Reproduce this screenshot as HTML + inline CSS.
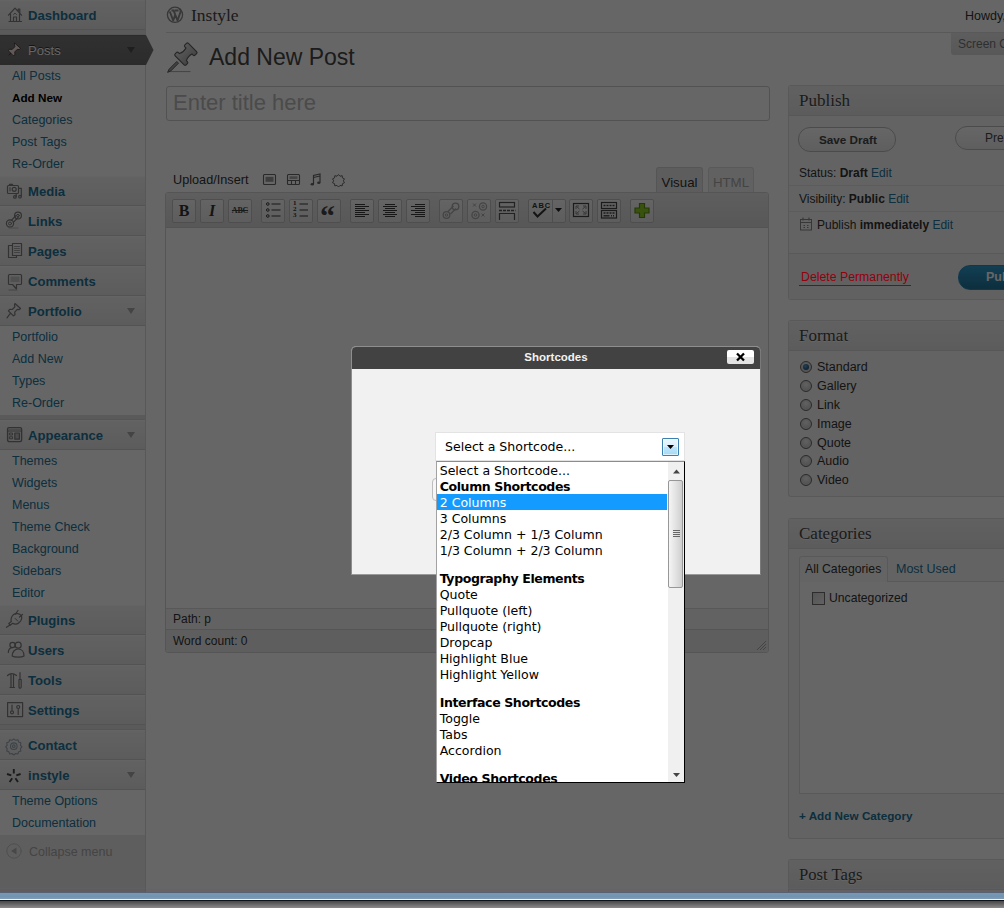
<!DOCTYPE html>
<html lang="en"><head><meta charset="utf-8"><title>Add New Post - Instyle - WordPress</title>
<style>
*{box-sizing:border-box;margin:0;padding:0}
html,body{width:1004px;height:908px;overflow:hidden;background:#fff}
body{font-family:"Liberation Sans",Arial,sans-serif;font-size:12px;color:#333;position:relative}
a{color:#21759b;text-decoration:none}
.abs{position:absolute}
#page{z-index:0;position:absolute;left:0;top:0;width:1004px;height:892px;overflow:hidden;background:#fff}
/* ---------- sidebar ---------- */
#menu{position:absolute;left:0;top:0;width:146px;height:892px;background:#ececec;border-right:1px solid #dcdcdc}
.mt{position:absolute;left:0;width:145px;height:30px;background:linear-gradient(#f4f4f4,#e6e6e6);border-top:1px solid #f9f9f9;border-bottom:1px solid #d0d0d0;font-weight:bold;font-size:13.1px;color:#21759b;line-height:30px;padding-left:28px;white-space:nowrap}
.mt.cur{background:linear-gradient(#7a7a7a,#6d6d6d);color:#fff;border-color:#6d6d6d;font-weight:normal;text-shadow:0 -1px 0 #333}
.mt .tg{position:absolute;right:10px;top:11px;width:0;height:0;border:4px solid transparent;border-top:6px solid #aaa;border-bottom:0}
.sm{position:absolute;left:0;width:145px;background:#fff}
.sm a{display:block;height:22px;line-height:22px;padding-left:12px;font-size:12.5px;color:#21759b;white-space:nowrap}
.sm a.c{color:#000;font-weight:bold;font-size:11.7px}
.mt.cur .tg{border-top-color:#4c4c4c}
.sep{position:absolute;left:0;width:145px;height:5px;background:#e2e2e2;border-bottom:1px solid #d4d4d4}
.ic{position:absolute;left:6px;top:6px;width:18px;height:18px}
/* ---------- overlay ---------- */
#ov{position:absolute;left:0;top:0;width:1004px;height:892px;background:rgba(0,0,0,.6)}
/* ---------- main ---------- */
#main{position:absolute;left:146px;top:0;width:858px;height:892px}
#main .abs{white-space:nowrap}
.geo{font-family:"Liberation Serif",Georgia,serif}
.box{position:absolute;left:642px;width:241px;background:#f8f8f8;border:1px solid #dfdfdf;border-radius:3px 0 0 3px;border-right:0}
.box h3{height:30px;line-height:29px;font-family:"Liberation Serif",Georgia,serif;font-weight:normal;font-size:17px;color:#464646;padding-left:10px;background:linear-gradient(#f2f2f2,#e6e6e6);border-bottom:1px solid #dadada;text-shadow:0 1px 0 #fff}
.tb{position:absolute;top:199px;width:24px;height:24px;border:1px solid #c4c4c4;border-radius:2px;background:linear-gradient(#fafafa,#e9e9e9)}
.tb svg{position:absolute;left:1px;top:1px;width:20px;height:20px}
.rad{position:absolute;left:654px;width:12px;height:12px;border-radius:50%;border:1px solid #6a6a6a;background:radial-gradient(circle at 50% 35%,#f4f4f4,#bcbcbc);box-shadow:inset 0 0 0 1px #dcdcdc;margin-top:.5px}
.rad.sel:after{content:"";position:absolute;left:2px;top:2px;width:6px;height:6px;border-radius:50%;background:radial-gradient(circle at 40% 35%,#5aa0d0,#12385c)}
.rl{position:absolute;left:671px;font-size:12.5px;color:#333;line-height:16px}
/* ---------- modal ---------- */
#modal{position:absolute;left:351px;top:346px;width:410px;height:229px;background:#f1f1f1;border-radius:5px 5px 0 0;border:1px solid #8e8e8e;border-right-color:#7a7a7a;border-bottom-color:#9a9a9a}
#mt{position:absolute;left:0;top:0;width:408px;height:22px;background:#424242;border-radius:4px 4px 0 0;color:#f2f2f2;font-weight:bold;font-size:11.5px;line-height:21px;text-align:center}
#mx{position:absolute;left:375px;top:3px;width:27px;height:14px;background:linear-gradient(#fff 52%,#e4e4e4 52%);border-radius:2px}
#sel{position:absolute;left:435px;top:432px;width:250px;height:29px;background:#fff;border:1px solid #e3e3e3;font-family:"DejaVu Sans",Verdana,sans-serif;font-size:12.55px;line-height:27px;padding-left:9px;color:#000;white-space:nowrap}
#dd{position:absolute;left:436px;top:461px;width:249px;height:322px;background:#fff;border:1px solid #000;border-top-color:#8c8c8c;border-left-color:#a2a2a2;overflow:hidden;font-family:"DejaVu Sans",Verdana,sans-serif;font-size:12.55px;color:#000}
#dd>div{height:16px;line-height:16px;padding-left:2.7px;position:relative;top:1px;white-space:nowrap;width:232px}
#dd>div.g{font-weight:bold;margin-top:12px;letter-spacing:-.4px}
#dd>div.g1{font-weight:bold;letter-spacing:-.4px}
#dd>div.h{background:#149bff;color:#fff;width:230px;top:0;line-height:18px}
#dd>#sb{position:absolute;left:231px;top:0;width:16px;height:320px;background:#f0f0f0;padding:0}
#th{position:absolute;left:0;top:18px;width:15px;height:108px;border:1px solid #979797;border-radius:2px;background:linear-gradient(90deg,#f5f5f5,#e3e3e3 50%,#cfcfcf)}
/* ---------- window frame ---------- */
#frame{position:absolute;left:0;top:888px;width:1004px;height:20px}
#frame i{position:absolute;left:0;width:1004px;display:block}

</style></head><body>
<div id="page">
<div id="menu">
<div class="mt" style="top:0">Dashboard</div>
<div class="sep" style="top:30px"></div>
<div class="mt cur" style="top:35px">Posts<i class="tg"></i></div>
<svg class="abs" style="left:145px;top:35px" width="9" height="30" viewBox="0 0 9 30"><defs><linearGradient id="ag" x1="0" y1="0" x2="0" y2="1"><stop offset="0" stop-color="#7a7a7a"/><stop offset="1" stop-color="#6d6d6d"/></linearGradient></defs><path d="M0 0h1l7.500 15-7.500 15h-1z" fill="url(#ag)"/></svg>
<div class="sm" style="top:65px;height:111px"><a>All Posts</a><a class="c">Add New</a><a>Categories</a><a>Post Tags</a><a>Re-Order</a></div>
<div class="mt" style="top:176px">Media</div>
<div class="mt" style="top:206px">Links</div>
<div class="mt" style="top:236px">Pages</div>
<div class="mt" style="top:266px">Comments</div>
<div class="mt" style="top:296px">Portfolio<i class="tg"></i></div>
<div class="sm" style="top:326px;height:89px"><a>Portfolio</a><a>Add New</a><a>Types</a><a>Re-Order</a></div>
<div class="sep" style="top:415px"></div>
<div class="mt" style="top:420px">Appearance<i class="tg"></i></div>
<div class="sm" style="top:450px;height:155px"><a>Themes</a><a>Widgets</a><a>Menus</a><a>Theme Check</a><a>Background</a><a>Sidebars</a><a>Editor</a></div>
<div class="mt" style="top:605px">Plugins</div>
<div class="mt" style="top:635px">Users</div>
<div class="mt" style="top:665px">Tools</div>
<div class="mt" style="top:695px">Settings</div>
<div class="sep" style="top:725px"></div>
<div class="mt" style="top:730px">Contact</div>
<div class="mt" style="top:760px">instyle<i class="tg"></i></div>
<div class="sm" style="top:790px;height:45px"><a>Theme Options</a><a>Documentation</a></div>
<div class="abs" style="left:29px;top:844px;font-size:12.5px;color:#aaa;line-height:16px">Collapse menu</div>

<svg class="abs" style="left:0;top:0" width="146" height="892" viewBox="0 0 146 892" fill="none" stroke="#7d7d7d" stroke-width="1.2" stroke-linejoin="round" stroke-linecap="round">
<!-- dashboard house -->
<g><path d="M8.5 15.2L15 8.2l6.500 7M10.500 14v7.500M19.500 14v7.500M9 21.500h12.500M13.500 21.500v-4.500h3v4.500M18.200 11v-2h1.600v3.600"/><path d="M13.600 14.500l1.400-1.400 1.400 1.400" stroke-width="1"/></g>
<!-- posts pin (light on dark) -->
<g stroke="none"><path d="M8 56l5.500-6.500 1.200 1.200z" fill="#1a1a1a"/><path d="M14.800 43.200l5.800 5.200-1.600 1.200-1.700-.3-2.600 2.700.3 2.600-1.700 1.100-4.900-5 1.200-1.500 2.600.2 2.700-2.700-.4-1.800z" fill="#f3dcdc" stroke="#3a3030" stroke-width=".8"/></g>
<!-- media -->
<g><rect x="7.500" y="185.500" width="11" height="8" rx="1"/><path d="M9.500 185.500v-1.200h3v1.200"/><circle cx="14.200" cy="189.300" r="2"/><path d="M10 187.500v3.500" stroke-width="1"/><path d="M16.200 196.500v-3M18.500 188.300h2.800v8"/><circle cx="14.900" cy="196.900" r="1.300"/><circle cx="20" cy="196.700" r="1.300"/></g>
<!-- links chain -->
<g><circle cx="10" cy="223.500" r="3.600"/><circle cx="10" cy="223.500" r="1.500" stroke-width="1"/><circle cx="18" cy="215.600" r="3.400"/><circle cx="18" cy="215.600" r="1.300" stroke-width="1"/><path d="M11.300 220.300l4.800-4.800M13.300 222.300l4.800-4.800" /><path d="M9 228h9" stroke="#bbb" stroke-width="1"/></g>
<!-- pages -->
<g><path d="M12 245.500h-3.500v12h8v-1.500"/><rect x="12.500" y="243.500" width="9" height="12"/><path d="M14.500 246.500h5M14.500 248.500h5M14.500 250.500h5M14.500 252.500h5" stroke-width=".9" stroke="#999"/></g>
<!-- comments -->
<g><path d="M9.500 274.500h11a1 1 0 0 1 1 1v8a1 1 0 0 1-1 1h-4v4.500l-4-4.500h-3a1 1 0 0 1-1-1v-8a1 1 0 0 1 1-1z"/><rect x="10.500" y="276.500" width="9" height="5.500" fill="#c8c8c8" stroke="none"/><path d="M9 290h8" stroke="#aaa" stroke-width="1"/></g>
<!-- portfolio pin -->
<g><path d="M15 303.500l5.500 5-1.500 1.200-1.700-.3-2.600 2.700.3 2.600-1.600 1.100-5-5 1.300-1.500 2.500.2 2.700-2.700-.4-1.800zM10.500 313.200l-3.500 4.600"/></g>
<!-- appearance -->
<g><rect x="7.600" y="427.600" width="14" height="14" rx="1.500" stroke-width="1.400"/><path d="M8 431h13.500" /><path d="M9 429.300h11.500" stroke="#aaa" stroke-width="1"/><rect x="9.800" y="433" width="2.800" height="2" stroke-width="1"/><rect x="9.800" y="436.800" width="2.800" height="2" stroke-width="1"/><rect x="14.800" y="433" width="4.600" height="6.200" fill="#bdbdbd"/></g>
<!-- plugins -->
<g><path d="M13 614.500c2-2 6-1.500 7.500 0s1.500 5-1 7.500c-2 2-4.500 2.300-6.200 1.400l-2.300 2.300-1.500-1.500 2.200-2.300c-1-1.700-.700-5.400 1.300-7.400z" transform="rotate(8 14 619)"/><path d="M15.500 614l2.500-3.500M19.500 617l3-2.500M10 625l-3.500 2.300"/><path d="M15.200 618.500l2.600 2.600" stroke-width="1"/></g>
<!-- users -->
<g><circle cx="12.500" cy="645" r="2.600"/><path d="M8.300 652.500c.2-3 1.700-4.500 3.500-4.800"/><circle cx="18.200" cy="645.200" r="3"/><path d="M12.200 656c0-4 2.500-7 6-7s5.800 3 5.800 7c-2 1.500-9.800 1.500-11.800 0z"/></g>
<!-- tools -->
<g><path d="M7.500 675.500c2.500-2.300 6-2.300 9 0M11 674.500v13M13.500 674.500v13M10 687.500h4.500"/><path d="M20 672.500v6.500M19 679.500h2.200v7.500a1.100 1.100 0 0 1-2.200 0z"/></g>
<!-- settings -->
<g><rect x="7.600" y="702.600" width="15" height="14"/><path d="M12 705v5M18.200 709.500v5"/><circle cx="12" cy="712.300" r="1.500"/><circle cx="18.200" cy="707" r="1.500"/></g>
<!-- contact gear -->
<g stroke="#9aa7b4" stroke-width="1.100"><path d="M13.800 738.800l1.800 1.500 2.300-.5.800 2.200 2.200.8-.5 2.300 1.500 1.800-1.500 1.800.5 2.300-2.200.8-.8 2.200-2.300-.5-1.800 1.500-1.800-1.500-2.300.5-.8-2.200-2.200-.8.500-2.300-1.500-1.800 1.500-1.800-.5-2.300 2.200-.8.800-2.200 2.300.5z"/><circle cx="13.800" cy="746.200" r="3.300"/><circle cx="13.800" cy="746.200" r="1.300"/></g>
<!-- instyle star -->
<g stroke="#444" stroke-width="1.900" stroke-linecap="butt"><path d="M13.800 769v4.500M7 774l4.300 1.400M20.600 774l-4.300 1.400M9.600 782l2.600-3.700M18 782l-2.600-3.700"/></g>
<!-- collapse -->
<g stroke="#c4c4c4"><circle cx="14" cy="851" r="7.200" stroke-width="1"/><path d="M16.500 847.500v7l-5.500-3.500z" fill="#b4b4b4" stroke="none"/></g>
</svg>

</div>
<div id="main">
<!-- header -->
<div class="abs" style="left:20px;top:32px;width:838px;height:1px;background:#dfdfdf"></div>
<div class="abs geo" style="left:45px;top:5px;font-size:17.5px;line-height:20px;color:#464646">Instyle</div>
<div class="abs" style="left:819px;top:8px;font-size:12.5px;line-height:16px;color:#333">Howdy, admin</div>
<div class="abs" style="left:805px;top:33px;width:70px;height:22px;background:linear-gradient(#eaeaea,#dcdcdc);border-radius:0 0 0 3px;font-size:12px;line-height:23px;padding-left:7px;color:#777">Screen Options</div>
<div class="abs" style="left:63px;top:40px;font-size:23px;line-height:34px;color:#464646;text-shadow:0 1px 0 #fff">Add New Post</div>
<!-- title -->
<div class="abs" style="left:20px;top:86px;width:604px;height:35px;border:1px solid #ccc;border-radius:3px;background:#fff;font-size:22px;line-height:32px;padding-left:6px;color:#bbb">Enter title here</div>
<!-- upload/insert -->
<div class="abs" style="left:27px;top:172px;font-size:12.7px;line-height:16px;color:#333">Upload/Insert</div>
<!-- tabs -->
<div class="abs" style="left:510px;top:167px;width:47px;height:27px;background:#e9e9e9;border:1px solid #d4d4d4;border-bottom:0;border-radius:3px 3px 0 0;font-size:13.3px;line-height:29px;text-align:center;color:#333">Visual</div>
<div class="abs" style="left:562px;top:167px;width:46px;height:25px;background:#f3f3f3;border:1px solid #dfdfdf;border-bottom:0;border-radius:3px 3px 0 0;font-size:13.3px;line-height:29px;text-align:center;color:#aaa">HTML</div>
<!-- editor -->
<div class="abs" style="left:19px;top:192px;width:604px;height:461px;border:1px solid #d4d4d4;border-radius:3px;background:#fff"></div>
<div class="abs" style="left:20px;top:193px;width:602px;height:35px;background:linear-gradient(#ebebeb,#dadada);border-bottom:1px solid #cfcfcf;border-radius:3px 3px 0 0"></div>
<div class="abs" style="left:20px;top:608px;width:602px;height:21px;background:#f6f6f6;border-top:1px solid #dcdcdc;font-size:12px;line-height:20px;padding-left:7px;color:#333">Path: p</div>
<div class="abs" style="left:20px;top:629px;width:602px;height:23px;background:#ececec;border-top:1px solid #d4d4d4;font-size:12px;line-height:22px;padding-left:7px;color:#333;border-radius:0 0 3px 3px">Word count: 0</div>
<!-- toolbar buttons -->
<div class="tb" style="left:26px"></div><div class="tb" style="left:54px"></div><div class="tb" style="left:82px"></div>
<div class="tb" style="left:115px"></div><div class="tb" style="left:143px"></div><div class="tb" style="left:171px"></div>
<div class="tb" style="left:204px"></div><div class="tb" style="left:232px"></div><div class="tb" style="left:260px"></div>
<div class="tb" style="left:293px"></div><div class="tb" style="left:321px"></div><div class="tb" style="left:349px"></div>
<div class="tb" style="left:382px;width:38px"></div><div class="tb" style="left:423px"></div><div class="tb" style="left:451px"></div>
<div class="tb" style="left:484px"></div>
<!-- publish box -->
<div class="box" style="top:85px;height:215px"><h3>Publish</h3></div>
<div class="abs" style="left:652px;top:127px;width:98px;height:25px;border:1px solid #bbb;border-radius:12px;background:linear-gradient(#fff,#ececec);font-size:11.7px;font-weight:bold;line-height:23px;padding-left:2px;text-align:center;color:#464646">Save Draft</div>
<div class="abs" style="left:809px;top:126px;width:98px;height:24px;border:1px solid #bbb;border-radius:12px;background:linear-gradient(#fff,#ececec);font-size:12px;line-height:22px;padding-left:29px;color:#464646">Preview</div>
<div class="abs" style="left:653px;top:165px;font-size:12px;line-height:16px">Status: <b>Draft</b> <a>Edit</a></div>
<div class="abs" style="left:643px;top:185px;width:215px;height:1px;background:#e6e6e6"></div>
<div class="abs" style="left:653px;top:191px;font-size:12px;line-height:16px">Visibility: <b>Public</b> <a>Edit</a></div>
<div class="abs" style="left:643px;top:211px;width:215px;height:1px;background:#e6e6e6"></div>
<div class="abs" style="left:671px;top:217px;font-size:12px;line-height:16px">Publish <b>immediately</b> <a>Edit</a></div>
<div class="abs" style="left:643px;top:253px;width:215px;height:1px;background:#dfdfdf"></div>
<div class="abs" style="left:643px;top:254px;width:215px;height:45px;background:#f3f3f3"></div>
<div class="abs" style="left:812px;top:265px;width:80px;height:25px;border:1px solid #298cba;border-radius:12px;background:linear-gradient(#2e9ccf,#21759b);font-size:12.5px;font-weight:bold;line-height:23px;padding-left:27px;color:#fff">Publish</div>
<!-- format box -->
<div class="box" style="top:320px;height:177px"><h3>Format</h3></div>
<i class="rad sel" style="top:360px"></i><div class="rl" style="top:359px">Standard</div>
<i class="rad" style="top:379px"></i><div class="rl" style="top:378px">Gallery</div>
<i class="rad" style="top:398px"></i><div class="rl" style="top:397px">Link</div>
<i class="rad" style="top:417px"></i><div class="rl" style="top:416px">Image</div>
<i class="rad" style="top:436px"></i><div class="rl" style="top:435px">Quote</div>
<i class="rad" style="top:454px"></i><div class="rl" style="top:453px">Audio</div>
<i class="rad" style="top:473px"></i><div class="rl" style="top:472px">Video</div>
<!-- categories box -->
<div class="box" style="top:518px;height:321px"><h3>Categories</h3></div>
<div class="abs" style="left:653px;top:581px;width:210px;height:213px;border:1px solid #dfdfdf;background:#fff"></div>
<div class="abs" style="left:653px;top:556px;width:89px;height:26px;border:1px solid #dfdfdf;border-bottom:0;background:#fafafa;border-radius:3px 3px 0 0;font-size:12.25px;line-height:25px;padding-left:5px;color:#333">All Categories</div>
<div class="abs" style="left:750px;top:561px;font-size:12.5px;line-height:16px"><a>Most Used</a></div>
<div class="abs" style="left:666px;top:592px;width:13px;height:13px;border:1px solid #707070;background:linear-gradient(135deg,#d4d4d4,#f4f4f4)"></div>
<div class="abs" style="left:683px;top:590px;font-size:12.2px;line-height:16px">Uncategorized</div>
<div class="abs" style="left:653px;top:808px;font-size:11.7px;line-height:16px;font-weight:bold"><a>+ Add New Category</a></div>
<!-- post tags -->
<div class="box" style="top:859px;height:60px"><h3 style="font-size:16.6px;line-height:30px">Post Tags</h3></div>

<svg class="abs" style="left:-146px;top:0" width="1004" height="892" viewBox="0 0 1004 892" fill="none" stroke="#444" stroke-width="1.2">
<!-- wp logo -->
<g stroke="#8a8a8a"><circle cx="175" cy="14.800" r="7.600" stroke-width="1.300"/><path d="M169.800 11.500l3.400 9 2-5.800 2.300 5.800 3-8.500c.5-1.500-.2-2.600-1-3.200M171.500 10.500h3M175 10.500h3.500M175.200 14.700l-1.500-4" stroke-width="1.900" stroke-linejoin="round"/></g>
<!-- big pin -->
<defs><linearGradient id="pg" x1="0" y1="0" x2="1" y2="0"><stop offset="0" stop-color="#dcdcdc"/><stop offset=".5" stop-color="#c6c6c6"/><stop offset="1" stop-color="#a8a8a8"/></linearGradient></defs>
<path d="M168.500 71.600h22" stroke="#a8a8a8" stroke-width="1"/>
<g transform="translate(180.500 59.500) rotate(45)"><path d="M-1.200 4v11l1.200 3.200 1.200-3.200v-11z" fill="#a4a4a4" stroke="#5a5a5a" stroke-width=".9"/><path d="M-5.800 -17h11.600a1.400 1.400 0 0 1 1.400 1.400v2.200a1.400 1.400 0 0 1-1.400 1.400h-1.600c-.9 3-.7 5.800 .8 8.600h1.300a1.500 1.500 0 0 1 1.500 1.500v1.600a1.500 1.500 0 0 1-1.500 1.500h-12.600a1.500 1.500 0 0 1-1.500-1.500v-1.600a1.500 1.500 0 0 1 1.500-1.500h1.300c1.500-2.800 1.700-5.600 .8-8.600h-1.600a1.400 1.400 0 0 1-1.400-1.400v-2.200a1.400 1.400 0 0 1 1.400-1.400z" fill="url(#pg)" stroke="#5c5c5c" stroke-width="1.100"/></g>
<!-- upload/insert icons -->
<g stroke="#666" stroke-width="1.100"><rect x="263.500" y="174.500" width="12" height="10" rx="1"/><rect x="265.500" y="176.800" width="8" height="5" fill="#999" stroke="none"/>
<rect x="287.500" y="174.500" width="12" height="10" rx="1"/><path d="M288 180.500h11.500M291.500 180.500v4M295.500 180.500v4"/><rect x="289.500" y="176.300" width="8" height="2.600" fill="#aaa" stroke="none"/>
<path d="M313.500 184v-8.500l6.500-1.500v8.500M313.500 177.500l6.500-1.500" stroke-width="1.200"/><ellipse cx="312.300" cy="184.300" rx="1.700" ry="1.300" fill="#666" stroke="none"/><ellipse cx="318.800" cy="182.800" rx="1.700" ry="1.300" fill="#666" stroke="none"/>
<path transform="translate(338.500 180) scale(.88) translate(-338.500 -180)" d="M338.500 173.800l1.700 1.900 2.500-.6.300 2.500 2.300 1.100-1.300 2.200 1.300 2.200-2.300 1.100-.3 2.500-2.500-.6-1.700 1.900-1.700-1.900-2.500.6-.3-2.500-2.300-1.100 1.300-2.200-1.300-2.200 2.300-1.100.3-2.500 2.500.6z" stroke-linejoin="round"/></g>
<!-- toolbar glyph icons (non-text) -->
<g stroke="#3a3a3a">
<!-- ul -->
<circle cx="267.800" cy="204" r="1.300" stroke-width="1"/><circle cx="267.800" cy="210" r="1.300" stroke-width="1"/><circle cx="267.800" cy="216" r="1.300" stroke-width="1"/><path d="M271.500 204h9M271.500 210h9M271.500 216h9" stroke-width="1.200"/>
<!-- ol lines -->
<path d="M299.500 204h8.500M299.500 210h8.500M299.500 216h8.500" stroke-width="1.200"/>
<!-- align left -->
<path d="M355 204.500h10M355 206.500h14M355 208.500h10M355 210.500h14M355 212.500h10M355 214.500h14M355 216.500h10" stroke-width="1.100"/>
<!-- align center -->
<path d="M385 204.500h10M383 206.500h14M385 208.500h10M383 210.500h14M385 212.500h10M383 214.500h14M385 216.500h10" stroke-width="1.100"/>
<!-- align right -->
<path d="M415 204.500h10M411 206.500h14M415 208.500h10M411 210.500h14M415 212.500h10M411 214.500h14M415 216.500h10" stroke-width="1.100"/>
</g>
<!-- link (disabled) -->
<g stroke="#aaa" stroke-width="1.300"><circle cx="446.500" cy="215" r="3.300"/><circle cx="455.500" cy="206.500" r="3.300"/><path d="M448 211.500l5.500-5.500M450.500 214l5.500-5.500"/><circle cx="446.500" cy="215" r="1.200" stroke-width="1"/></g>
<!-- unlink (disabled) -->
<g stroke="#aaa" stroke-width="1.300"><circle cx="483" cy="206.500" r="3.600"/><circle cx="483" cy="206.500" r="1.300" stroke-width="1"/><circle cx="475.500" cy="215" r="3.600"/><circle cx="475.500" cy="215" r="1.300" stroke-width="1"/><path d="M473 203.500l3 3M476 203.500l-3 3M481.500 213.500l3 3M484.500 213.500l-3 3" stroke-width="1"/></g>
<!-- more -->
<g stroke="#555"><rect x="499.500" y="202.500" width="15" height="4.500" stroke-width="1.200"/><path d="M499 210.500h16.500" stroke-dasharray="3 1" stroke-width="1.600"/><path d="M499.500 220v-6.500h15v6.500" stroke-width="1.200"/></g>
<!-- spellcheck -->
<g><path d="M533.500 212l4 4.500 8.500-8" stroke="#333" stroke-width="2" stroke-linejoin="miter"/><path d="M552.500 199.500v23" stroke="#c4c4c4" stroke-width="1"/><path d="M555 208h7l-3.500 4z" fill="#222" stroke="none"/></g>
<!-- fullscreen -->
<g stroke="#444"><rect x="573.500" y="203.500" width="15" height="13" stroke-width="1.200"/><path d="M576 209v-3h3M586 209v-3h-3M576 211v3h3M586 211v3h-3M576.500 206.500l3 2.500M585.500 206.500l-3 2.500M576.500 213.500l3-2.500M585.500 213.500l-3-2.500" stroke="#888" stroke-width="1"/></g>
<!-- kitchen sink -->
<g stroke="#444"><rect x="601.500" y="202.500" width="15" height="6" stroke-width="1.200"/><rect x="601.500" y="210.500" width="15" height="7.500" stroke-width="1.200"/><path d="M603.500 205.500h11" stroke-dasharray="2 1" stroke-width="1.600"/><path d="M603.500 213h11" stroke-dasharray="2 1" stroke-width="1.400"/><path d="M603.500 215.800h6" stroke-width="1.400"/><path d="M611 215.800h3.500" stroke-dasharray="1 1" stroke-width="1.400"/></g>
<!-- plus -->
<path d="M639.500 203.500h5v4.500h4.500v5h-4.500v4.500h-5v-4.500h-4.500v-5h4.500z" fill="#8fd026" stroke="#5c8f14" stroke-width="1.200"/>
<!-- calendar icon in publish box -->
<g stroke="#8a8a8a" stroke-width="1"><rect x="800.500" y="219.500" width="11" height="10.500"/><path d="M800.500 222.500h11" /><path d="M803 217.500v3M809 217.500v3" stroke-width="1.200"/><path d="M803.500 225.500h1.500M807 225.500h1.500M803.500 227.500h1.500M807 227.500h1.500" stroke-width="1"/></g>
<!-- resize handle -->
<g stroke="#aaa" stroke-width="1"><path d="M757 650l9-9M760 650l6-6M763 650l3-3"/></g>
</svg>
<div class="abs geo" style="left:30px;top:199px;width:16px;text-align:center;font-size:16px;font-weight:bold;line-height:24px;color:#333">B</div>
<div class="abs geo" style="left:58px;top:199px;width:16px;text-align:center;font-size:16px;font-weight:bold;font-style:italic;line-height:24px;color:#333">I</div>
<div class="abs geo" style="left:84px;top:199px;width:20px;text-align:center;font-size:8px;font-weight:bold;line-height:24px;color:#444;text-decoration:line-through;letter-spacing:-.2px">ABC</div>
<div class="abs geo" style="left:147px;top:200px;width:6px;font-size:7px;font-weight:bold;line-height:6px;color:#333;white-space:normal">1 2 3</div>
<div class="abs geo" style="left:174px;top:201px;width:20px;font-size:30px;font-weight:bold;line-height:30px;color:#444">“</div>
<div class="abs" style="left:386px;top:201px;font-size:7.500px;font-weight:bold;line-height:9px;color:#333;letter-spacing:1px">ABC</div>

</div>
</div>
<div id="ov"></div>
<div class="abs" style="left:799px;top:270px;padding:0 2px;font-size:12.3px;line-height:15px;color:#94000c;border-bottom:1px solid #94000c;white-space:nowrap">Delete Permanently</div>
<div id="modal"><div id="mt">Shortcodes</div><div id="mx"><svg width="27" height="14" viewBox="0 0 27 14" style="position:absolute;left:0;top:0"><path d="M10 3.500l7 7M17 3.500l-7 7" stroke="#000" stroke-width="2.300"/></svg></div>
<div class="abs" style="left:80px;top:131px;width:60px;height:23px;border:1px solid #bdbdbd;border-radius:4px;background:#f6f6f6"></div>
</div>
<div id="sel">Select a Shortcode...</div>
<div class="abs" style="left:662px;top:438px;width:17px;height:18px;border:1px solid #3c7fb1;border-radius:1px;background:linear-gradient(#eaf6fd,#d9f0fc 50%,#bee6fd 50%,#a7d9f5);box-shadow:inset 0 0 0 1px rgba(255,255,255,.6)"><svg width="15" height="15" viewBox="0 0 15 15" style="position:absolute;left:0;top:0"><path d="M4 6h7l-3.5 4z" fill="#000"/></svg></div>
<div id="dd">
<div>Select a Shortcode...</div>
<div class="g1">Column Shortcodes</div>
<div class="h">2 Columns</div>
<div>3 Columns</div>
<div>2/3 Column + 1/3 Column</div>
<div>1/3 Column + 2/3 Column</div>
<div class="g">Typography Elements</div>
<div>Quote</div>
<div>Pullquote (left)</div>
<div>Pullquote (right)</div>
<div>Dropcap</div>
<div>Highlight Blue</div>
<div>Highlight Yellow</div>
<div class="g">Interface Shortcodes</div>
<div>Toggle</div>
<div>Tabs</div>
<div>Accordion</div>
<div class="g">Video Shortcodes</div>
<div id="sb"><svg width="17" height="320" style="position:absolute;left:0;top:0"><path d="M5 11.5h7l-3.5-4z" fill="#444"/><path d="M5 311h7l-3.5 4z" fill="#444"/></svg><div id="th"></div>
<svg width="17" height="12" style="position:absolute;left:0;top:66px"><path d="M5 2.5h7M5 4.5h7M5 6.5h7M5 8.5h7" stroke="#666" stroke-width="1"/></svg></div>
</div>

<div id="frame">
<i style="top:0;height:1px;background:rgba(90,110,130,.18)"></i>
<i style="top:1px;height:3px;background:rgba(120,90,80,.16)"></i>
<i style="top:4px;height:1px;background:#576374"></i>
<i style="top:5px;height:6px;background:linear-gradient(#7899b6,#7394b1 60%,#7f9cb6)"></i>
<i style="top:11px;height:1px;background:#f0f5fa"></i>
<i style="top:12px;height:1px;background:#0f1115"></i>
<i style="top:13px;height:7px;background:linear-gradient(#464646,#8a8a8a)"></i>
</div>

</body></html>
